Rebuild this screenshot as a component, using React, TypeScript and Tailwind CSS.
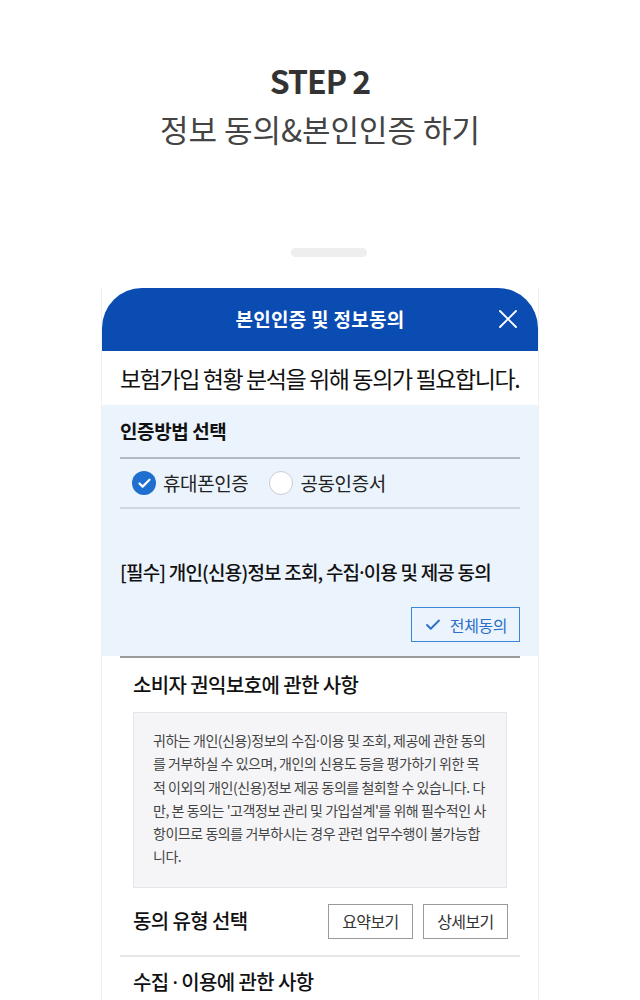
import { Check, X } from 'lucide-react';

const font = { fontFamily: '"Noto Sans CJK KR", "Noto Sans", sans-serif' };

// Noto CJK draws U+00B7 full width; take the narrow Latin dot instead
function Dot() {
  return <span className="font-['Noto_Sans']">·</span>;
}

function CheckedRadio() {
  return (
    <span className="w-6 h-6 rounded-full bg-[#1e6fd0] flex items-center justify-center">
      <Check size={15} strokeWidth={3.5} className="text-white" />
    </span>
  );
}

function EmptyRadio() {
  return <span className="w-6 h-6 rounded-full bg-white border border-[#c9ccd0]" />;
}

export default function App() {
  return (
    <div className="w-[640px] h-[1000px] overflow-hidden bg-white text-[#222]" style={font}>
      <div className="pt-[58px] flex flex-col items-center">
        <h1 className="text-[32px] leading-[44px] font-bold text-[#333] tracking-[-1px]">STEP 2</h1>
        <p className="mt-[7px] text-[31px] leading-[40px] text-[#444] tracking-[0px]">정보 동의&amp;본인인증 하기</p>
        <div className="mt-[99px] ml-[18px] w-[76px] h-[9px] rounded-full bg-[#eeeeee]" />
      </div>

      <div className="mt-[31px] mx-[101px] border-x border-[#f0f0f0]">
        <div className="h-[63px] rounded-t-[40px] bg-[#0a4cb2] relative flex items-center justify-center">
          <span className="text-white text-[19px] font-bold tracking-[0.3px]">본인인증 및 정보동의</span>
          <X size={32} strokeWidth={1.4} className="absolute right-[14px] top-[15px] text-white" />
        </div>

        <div className="h-[54px] flex items-center px-[18px]">
          <span className="text-[23px] text-[#111] tracking-[-1.4px]">보험가입 현황 분석을 위해 동의가 필요합니다.</span>
        </div>

        <div className="bg-[#ebf3fc] px-[18px]">
          <div className="h-[54px] flex items-center border-b-2 border-[#b5bac1]">
            <span className="text-[19px] font-bold tracking-[-0.4px] text-[#111]">인증방법 선택</span>
          </div>
          <div className="h-[50px] flex items-center pl-[12px] border-b-2 border-[#cfd6de]">
            <span className="flex items-center gap-[7px]">
              <CheckedRadio />
              <span className="text-[19px] tracking-[-0.4px] text-[#222]">휴대폰인증</span>
            </span>
            <span className="flex items-center gap-[7px] ml-[21px]">
              <EmptyRadio />
              <span className="text-[19px] tracking-[-0.4px] text-[#222]">공동인증서</span>
            </span>
          </div>
          <div className="pt-[49px] leading-[28px]">
            <span className="text-[19px] font-medium tracking-[-0.8px] text-[#111]">
              [필수] 개인(신용)정보 조회, 수집<Dot />이용 및 제공 동의
            </span>
          </div>
          <div className="flex justify-end pt-[20px] pb-[14px]">
            <button className="w-[109px] h-[35px] border border-[#3b86d8] flex items-center justify-center gap-[8px] text-[#2a6fc9]">
              <Check size={18} strokeWidth={2.5} />
              <span className="text-[16px] tracking-[-0.4px]">전체동의</span>
            </button>
          </div>
        </div>

        <div className="px-[18px]">
          <div className="border-t-2 border-[#9b9b9b]" />
          <div className="px-[13px]">
            <div className="h-[54px] flex items-center">
              <span className="text-[20px] font-medium tracking-[-0.6px] text-[#111]">소비자 권익보호에 관한 사항</span>
            </div>
            <div className="bg-[#f5f5f7] border border-[#e6e6e8] px-[19px] pt-[16px] pb-[18px] text-[14px] leading-[23.3px] text-[#444] tracking-[-0.45px] break-all">
              귀하는 개인(신용)정보의 수집<Dot />이용 및 조회, 제공에 관한 동의를 거부하실 수 있으며, 개인의 신용도 등을 평가하기 위한 목적 이외의 개인(신용)정보 제공 동의를 철회할 수 있습니다. 다만, 본 동의는 '고객정보 관리 및 가입설계'를 위해 필수적인 사항이므로 동의를 거부하시는 경우 관련 업무수행이 불가능합니다.
            </div>
            <div className="h-[67px] flex items-center justify-between">
              <span className="text-[20px] font-medium tracking-[-0.6px] text-[#111]">동의 유형 선택</span>
              <div className="flex gap-[10px] mr-[-1px]">
                <button className="w-[85px] h-[35px] border border-[#9a9a9a] text-[16px] text-[#333] tracking-[-0.6px]">요약보기</button>
                <button className="w-[85px] h-[35px] border border-[#9a9a9a] text-[16px] text-[#333] tracking-[-0.6px]">상세보기</button>
              </div>
            </div>
          </div>
          <div className="border-t-2 border-[#e8e8e8]" />
          <div className="px-[13px] h-[52px] flex items-center">
            <span className="text-[20px] font-medium tracking-[-0.6px] text-[#111]">
              수집 <Dot /> 이용에 관한 사항
            </span>
          </div>
        </div>
      </div>
    </div>
  );
}
